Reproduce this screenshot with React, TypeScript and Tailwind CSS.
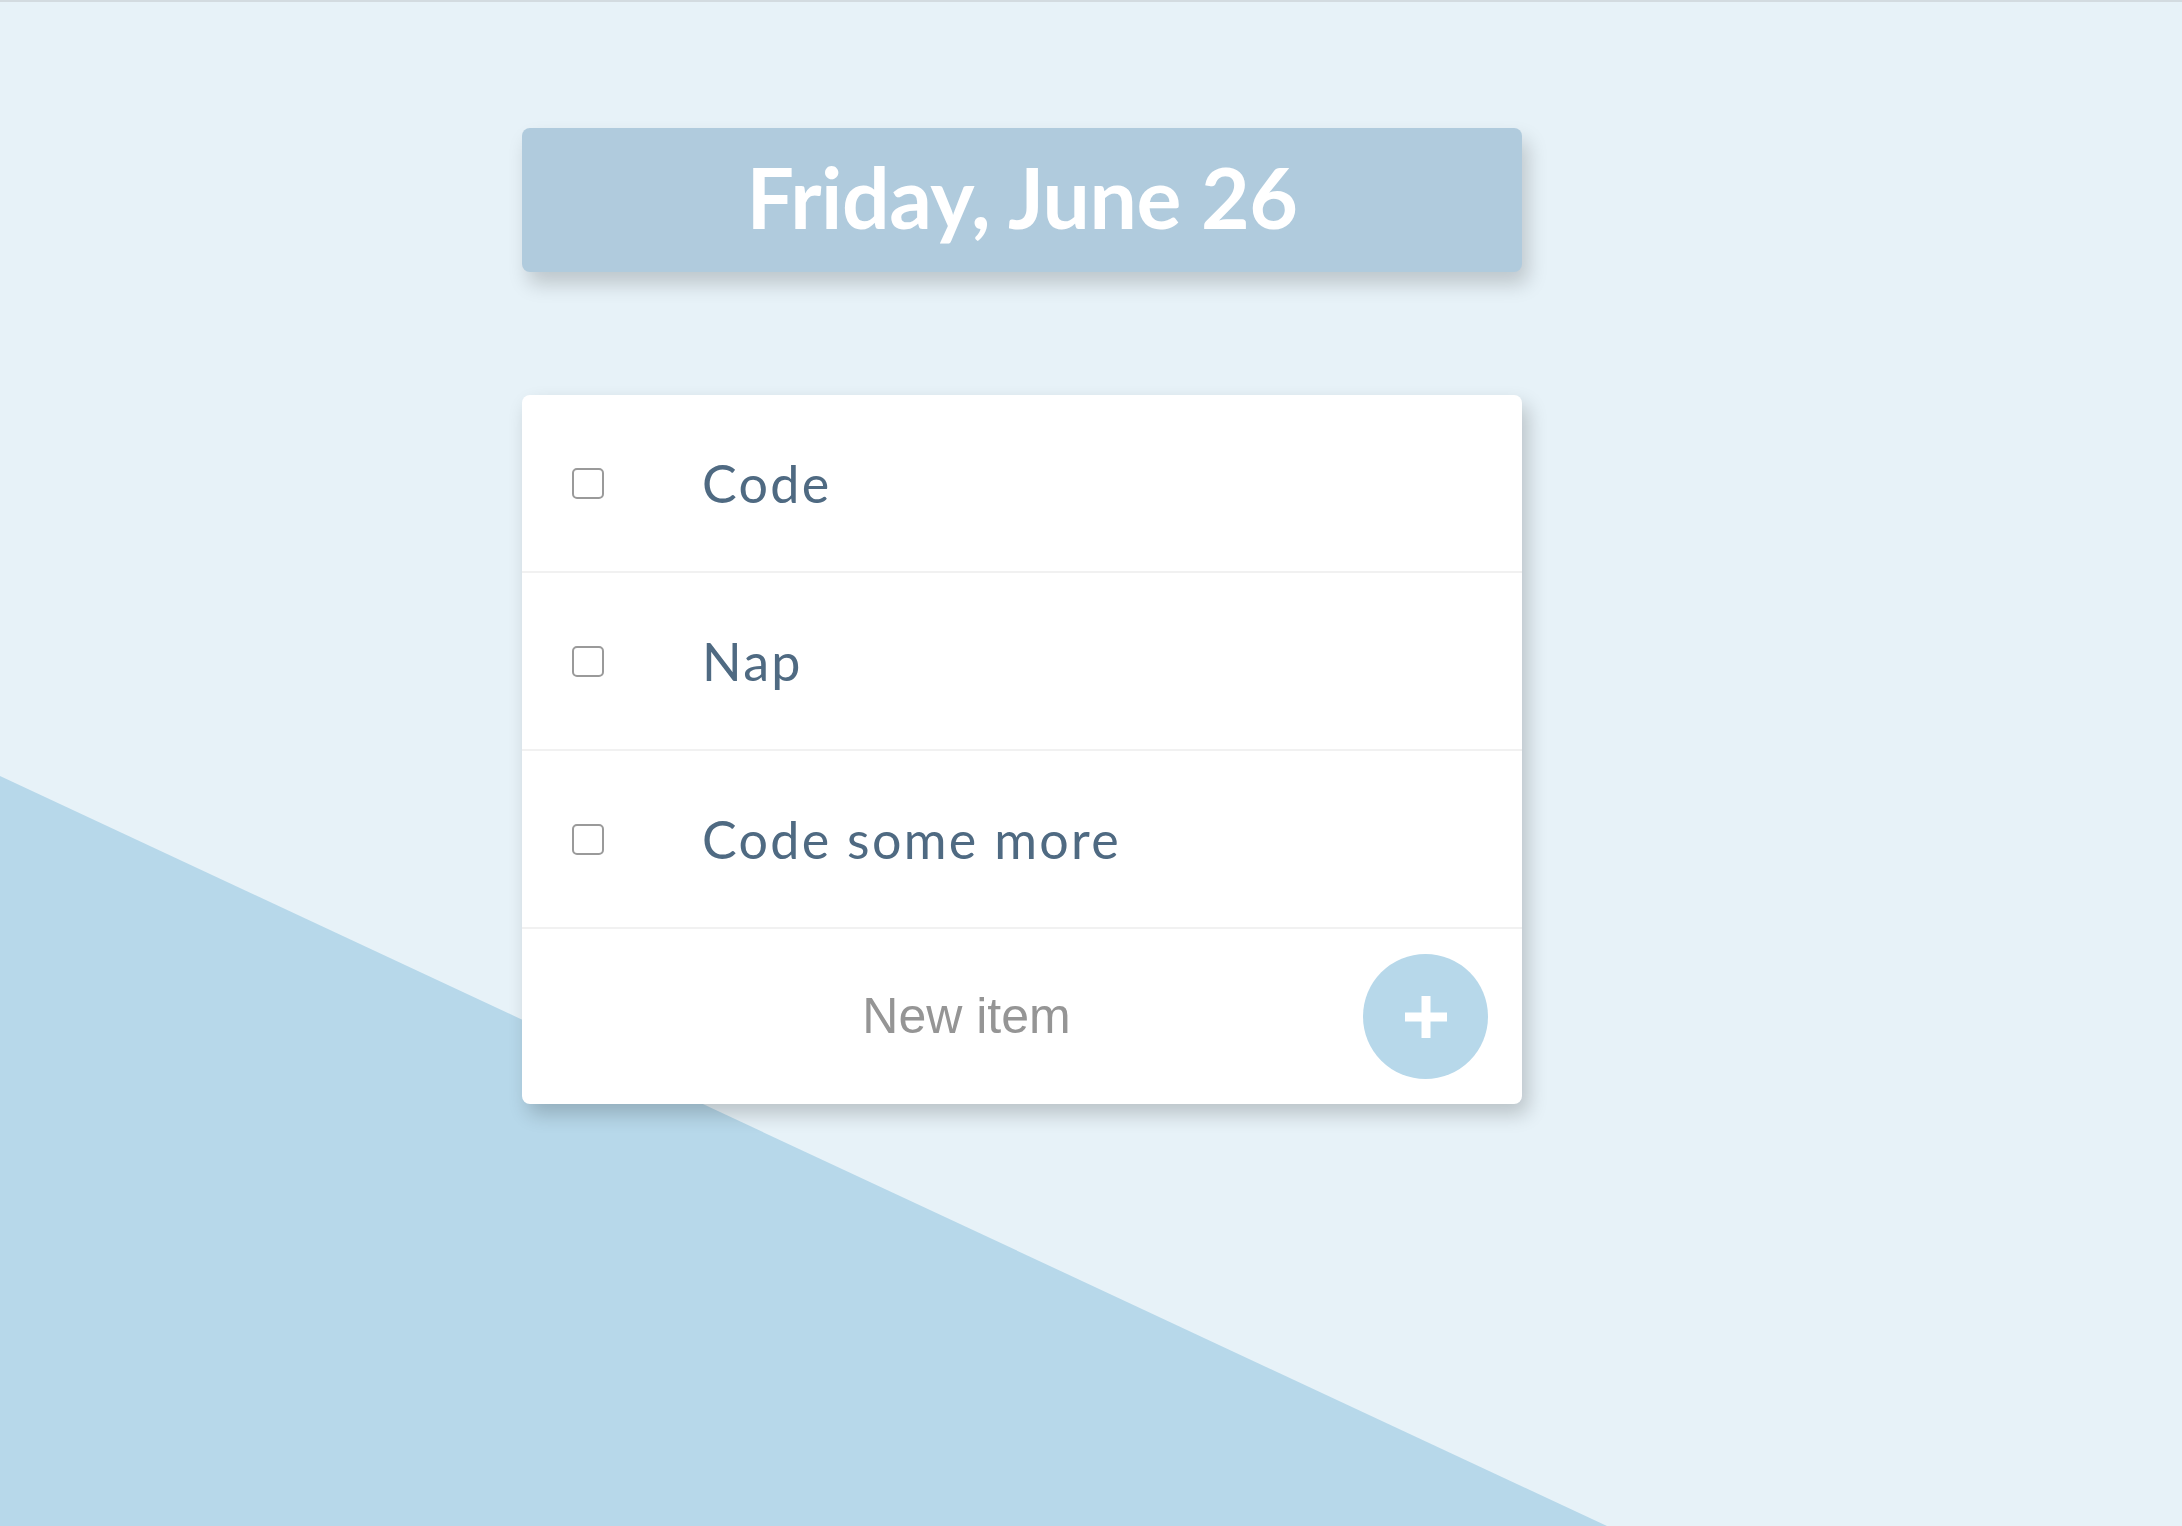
import * as React from "react";

const ITEMS = ["Code", "Nap", "Code some more"];

function Row({ label }: { label: string }) {
  return (
    <div className="flex h-[178px] items-center border-b-2 border-[#f1f1f1]">
      <input
        type="checkbox"
        className="ml-[50px] h-[31px] w-[32px] shrink-0 appearance-none rounded-[5px] border-[2.5px] border-[#9a9a9a] bg-white"
      />
      <p className="ml-[98px] text-[52px] tracking-[2.3px] text-[#4f6a82] [font-family:Lato,'Noto_Sans',sans-serif]">
        {label}
      </p>
    </div>
  );
}

export default function App() {
  const [text, setText] = React.useState("");

  return (
    <div className="relative h-[1526px] w-full overflow-hidden bg-[#e7f2f8]">
      <div className="absolute inset-x-0 top-0 h-[2px] bg-[#d3dbe0]" />
      <div className="absolute inset-0 bg-[#b7d8ea] [clip-path:polygon(0_776px,1607px_1526px,0_1526px)]" />

      <div className="relative ml-[522px] flex w-[1000px] flex-col pt-[128px]">
        <div className="flex h-[144px] items-center justify-center rounded-[8px] bg-[#b0cbdd] shadow-[6px_12px_20px_rgba(0,0,0,0.18)]">
          <h1 className="pb-[6px] text-[84px] font-bold tracking-[-0.4px] text-white [font-family:Lato,'Noto_Sans',sans-serif]">
            Friday, June 26
          </h1>
        </div>

        <div className="mt-[123px] overflow-hidden rounded-[8px] bg-white shadow-[6px_10px_20px_rgba(0,0,0,0.2)]">
          {ITEMS.map((item) => (
            <Row key={item} label={item} />
          ))}
          <form
            className="flex h-[175px] items-center pl-[48px] pr-[34px]"
            onSubmit={(e) => e.preventDefault()}
          >
            <input
              type="text"
              value={text}
              onChange={(e) => setText(e.target.value)}
              placeholder="New item"
              className="min-w-0 flex-1 bg-transparent text-center text-[50px] text-[#4f6a82] outline-none placeholder:text-[#959595] [font-family:'Liberation_Sans',Arial,sans-serif]"
            />
            <button
              type="submit"
              className="flex h-[125px] w-[125px] shrink-0 items-center justify-center rounded-full bg-[#b7d8ea]"
            >
              <svg width="44" height="44" viewBox="0 0 44 44" aria-hidden>
                <rect x="17.5" y="1" width="9" height="42" fill="#fff" />
                <rect x="1" y="17.5" width="42" height="9" fill="#fff" />
              </svg>
            </button>
          </form>
        </div>
      </div>
    </div>
  );
}
